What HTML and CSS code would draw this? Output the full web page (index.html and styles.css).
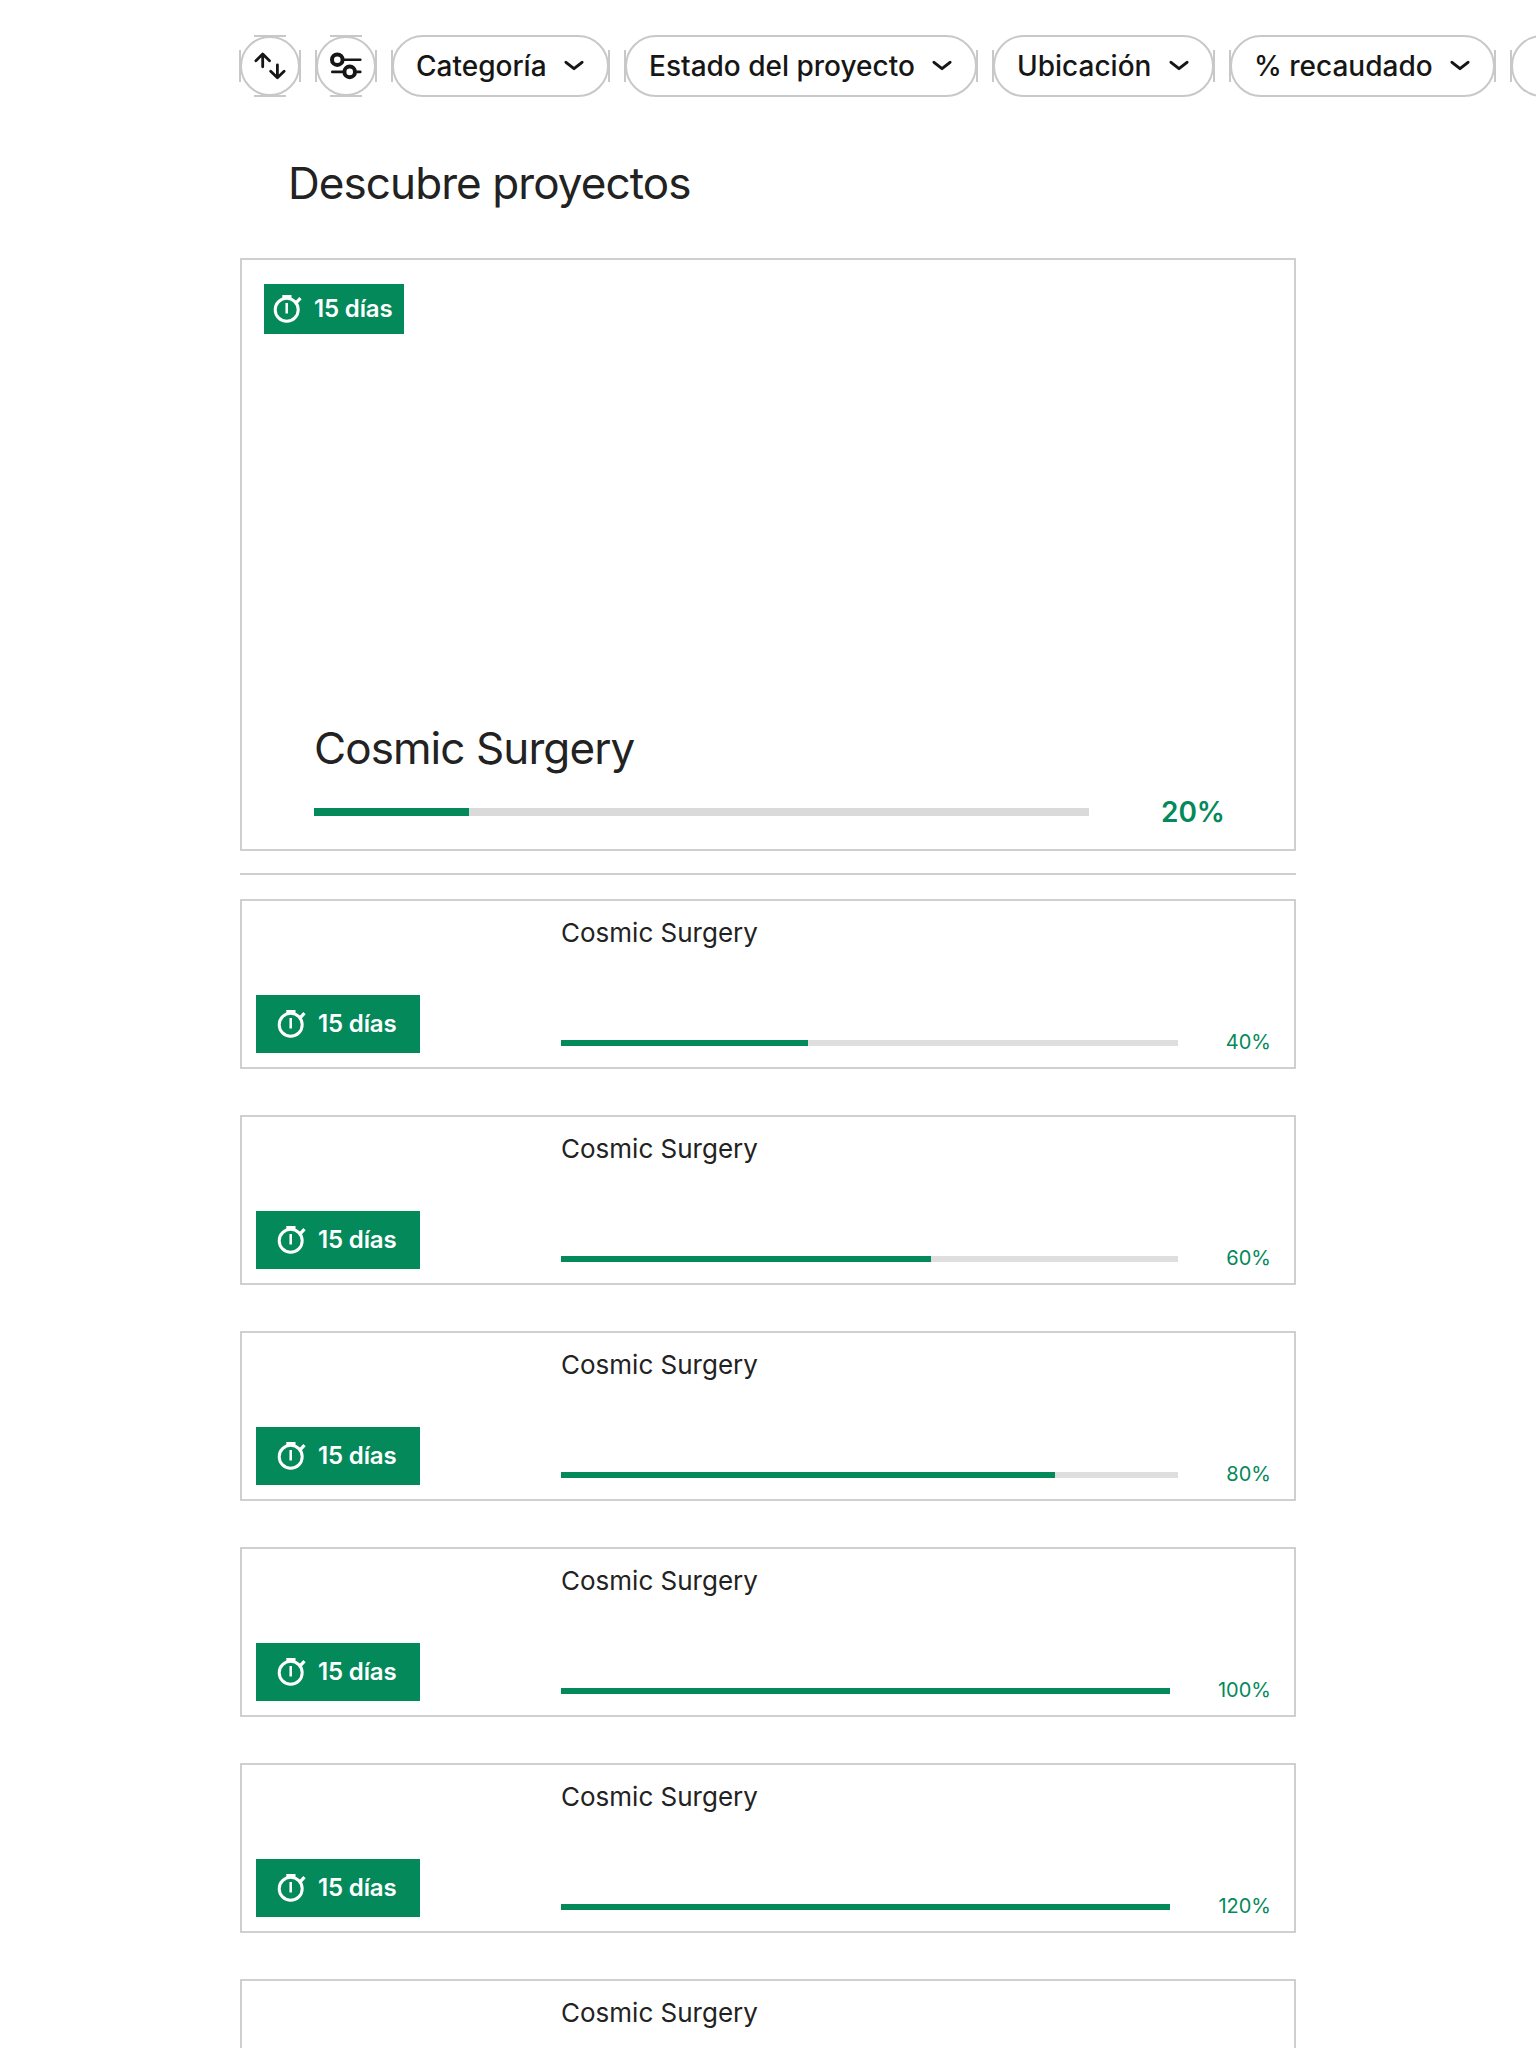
FILE: index.html
```html
<!DOCTYPE html>
<html lang="es">
<head>
<meta charset="utf-8">
<title>Descubre proyectos</title>
<link rel="stylesheet" href="styles.css">
</head>
<body>
<svg class="sprite" aria-hidden="true">
  <symbol id="timer" viewBox="0 0 30 30"><circle cx="13.700" cy="15.700" r="11.500" fill="none" stroke="currentColor" stroke-width="3"/><path d="M9.300 2.500h9.200M23.300 8.600l4.200-4.400" fill="none" stroke="currentColor" stroke-width="3.200"/><path d="M13.700 9v10.500" fill="none" stroke="currentColor" stroke-width="2.500"/></symbol>
  <symbol id="chevron" viewBox="0 0 20 12"><path d="M2 2.300l8 6.400 8-6.400" fill="none" stroke="currentColor" stroke-width="3" stroke-linecap="round" stroke-linejoin="round"/></symbol>
</svg>
<nav class="filters">
  <button class="pill round" aria-label="Ordenar"><span class="ticks"></span><svg width="32" height="32" viewBox="0 0 32 32" fill="none" stroke="currentColor" stroke-width="2.800" stroke-linecap="round" stroke-linejoin="round"><path d="M1.900 10.700l6.800-6.600 6.800 6.600M8.700 4.200v12.600M16.700 21.300l6.700 6.500 6.700-6.500M23.400 27.500V14.800"/></svg></button>
  <button class="pill round" aria-label="Filtros"><span class="ticks"></span><svg width="32" height="32" viewBox="0 0 32 32" fill="none" stroke="currentColor" stroke-linecap="round"><circle cx="7.300" cy="9.700" r="5.300" stroke-width="4"/><circle cx="19.700" cy="21.900" r="5.300" stroke-width="4"/><path d="M14 9.700h16.300M2.300 21.900h11M26.500 21.900h3.800" stroke-width="2.600"/></svg></button>
  <button class="pill cat">Categoría<svg class="chev"><use href="#chevron"/></svg></button>
  <button class="pill state">Estado del proyecto<svg class="chev"><use href="#chevron"/></svg></button>
  <button class="pill place">Ubicación<svg class="chev"><use href="#chevron"/></svg></button>
  <button class="pill raised">% recaudado<svg class="chev"><use href="#chevron"/></svg></button>
  <button class="pill more"></button>
</nav>
<main class="content">
  <h1 class="title">Descubre proyectos</h1>
  <article class="hero">
    <span class="badge"><svg class="timer"><use href="#timer"/></svg>15 días</span>
    <h2 class="hero-name">Cosmic Surgery</h2>
    <div class="hero-progress"><div class="bar"><div class="fill" style="width:20%"></div></div><span class="hero-percent">20%</span></div>
  </article>
  <hr class="rule">
  <section class="list">
    <article class="card"><span class="badge"><svg class="timer"><use href="#timer"/></svg>15 días</span><div class="info"><h3 class="name">Cosmic Surgery</h3><div class="progress"><div class="bar"><div class="fill" style="width:40%"></div></div><span class="percent">40%</span></div></div></article>
    <article class="card"><span class="badge"><svg class="timer"><use href="#timer"/></svg>15 días</span><div class="info"><h3 class="name">Cosmic Surgery</h3><div class="progress"><div class="bar"><div class="fill" style="width:60%"></div></div><span class="percent">60%</span></div></div></article>
    <article class="card"><span class="badge"><svg class="timer"><use href="#timer"/></svg>15 días</span><div class="info"><h3 class="name">Cosmic Surgery</h3><div class="progress"><div class="bar"><div class="fill" style="width:80%"></div></div><span class="percent">80%</span></div></div></article>
    <article class="card"><span class="badge"><svg class="timer"><use href="#timer"/></svg>15 días</span><div class="info"><h3 class="name">Cosmic Surgery</h3><div class="progress"><div class="bar"><div class="fill" style="width:100%"></div></div><span class="percent">100%</span></div></div></article>
    <article class="card"><span class="badge"><svg class="timer"><use href="#timer"/></svg>15 días</span><div class="info"><h3 class="name">Cosmic Surgery</h3><div class="progress"><div class="bar"><div class="fill" style="width:100%"></div></div><span class="percent">120%</span></div></div></article>
    <article class="card"><div class="info"><h3 class="name">Cosmic Surgery</h3></div></article>
  </section>
</main>
</body>
</html>
```
FILE: styles.css
```css
* { box-sizing: border-box; }
body { margin: 0; height: 2048px; overflow: hidden; background: #fff; color: #222; font-family: Inter, "Liberation Sans", sans-serif; }
.sprite { position: absolute; width: 0; height: 0; }
h1, h2, h3 { margin: 0; font-weight: 400; }

.filters { display: flex; gap: 14px; width: 1536px; padding: 35px 0 0 239px; overflow: hidden; }
.pill { position: relative; flex: none; display: flex; align-items: center; justify-content: space-between; height: 62px; padding: 0 26px 0 25px; border: 0; background: none; color: #161616; font: 500 28px Inter, "Liberation Sans", sans-serif; white-space: nowrap; }
.pill::before { content: ""; position: absolute; inset: 0 1px; border: 2px solid #c8c8c8; border-radius: 31px; }
.pill::after { content: ""; position: absolute; inset: 15px 0; border: solid #c8c8c8; border-width: 0 2px; }
.round { width: 62px; padding: 0; justify-content: center; }
.round::before { inset: 1px; border-radius: 50%; }
.ticks { position: absolute; inset: 0 15px; border: solid #c8c8c8; border-width: 2px 0; }
.cat { width: 219px; }
.state { width: 354px; }
.place { width: 223px; }
.raised { width: 267px; }
.more { width: 219px; }
.chev { width: 20px; height: 12px; }

.content { width: 1056px; margin-left: 240px; }
.title { padding: 59px 0 0 48px; height: 161px; font-size: 44px; line-height: 54px; letter-spacing: -0.92px; }
.hero { display: flex; flex-direction: column; height: 593px; padding: 24px 69px 22px 72px; border: 2px solid #cfcfcf; }
.badge { display: flex; align-items: center; background: #03895a; color: #fff; font-weight: 600; font-size: 24px; line-height: 1; letter-spacing: -0.15px; }
.timer { width: 30px; height: 30px; }
.hero .badge { width: 140px; height: 50px; margin-left: -50px; padding: 0 0 0 9px; gap: 11px; }
.hero-name { margin-top: auto; font-size: 44px; line-height: 54px; letter-spacing: -0.92px; }
.hero-progress { display: flex; align-items: center; justify-content: space-between; height: 30px; margin-top: 22px; }
.hero-progress .bar { width: 775px; height: 8px; }
.hero-percent { color: #03895a; font-weight: 600; font-size: 28px; }
.bar { background: #dadada; }
.fill { height: 100%; background: #03895a; }
.rule { height: 2px; margin: 22px 0 24px; border: 0; background: #cfcfcf; }

.list { display: flex; flex-direction: column; gap: 46px; }
.card { display: flex; align-items: flex-end; justify-content: space-between; height: 170px; padding: 14px 23px 14px 14px; border: 2px solid #cfcfcf; }
.card .badge { width: 164px; height: 58px; padding-left: 21px; gap: 11px; }
.info { display: flex; flex-direction: column; justify-content: space-between; width: 710px; height: 138px; }
.card .info { margin-left: auto; }
.name { font-size: 26px; line-height: 36px; }
.progress { display: flex; align-items: center; gap: 48px; height: 24px; margin-bottom: -2px; }
.progress .bar { flex: 1; height: 6px; background: #dedede; }
.percent { margin-top: -2px; color: #03895a; font-size: 20px; }
```
